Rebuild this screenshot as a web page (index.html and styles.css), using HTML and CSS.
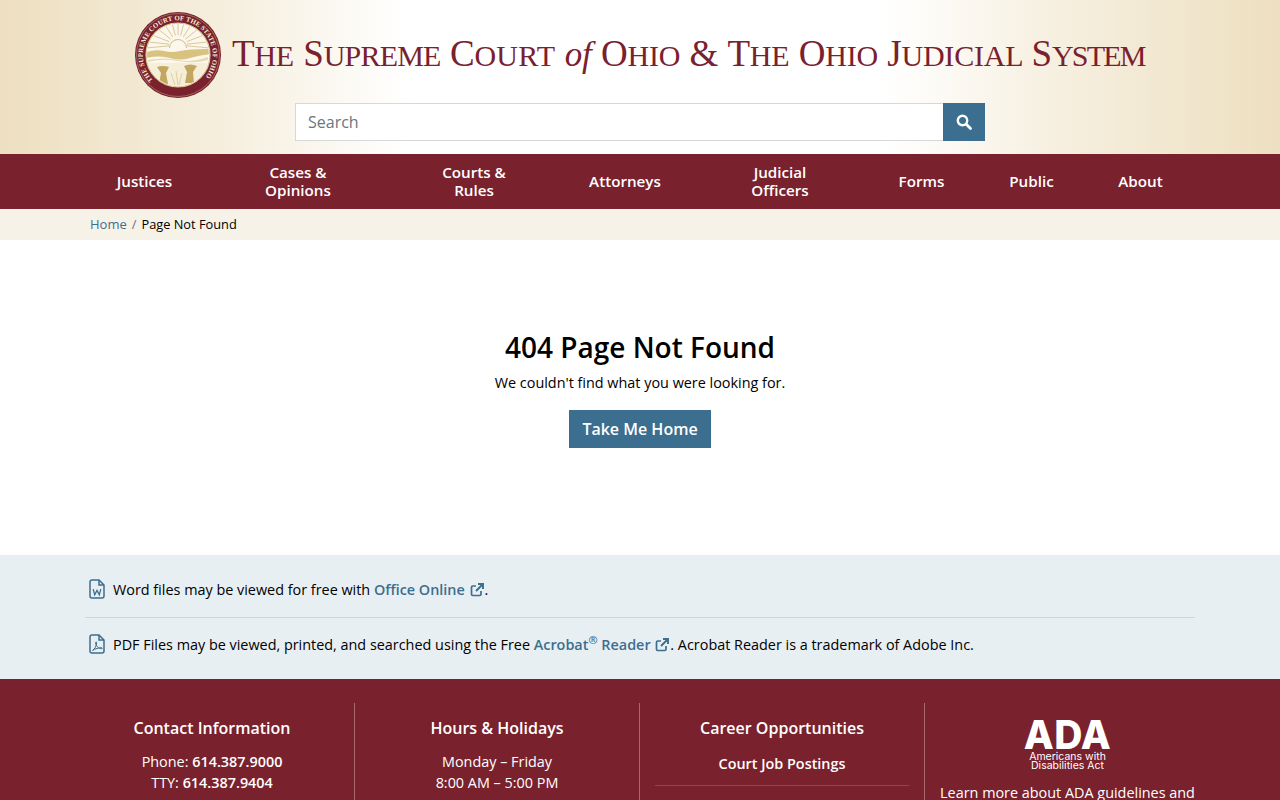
FILE: index.html
```html
<!DOCTYPE html>
<html lang="en">
<head>
<meta charset="utf-8">
<title>404 Page Not Found</title>
<link rel="stylesheet" href="styles.css">
</head>
<body>
<header class="masthead">
  <div class="brand">
    <svg class="seal" viewBox="0 0 88 88" aria-hidden="true">
      <defs>
        <path id="sealArc" d="M19 69 A35 35 0 1 1 70 67.500"/>
        <clipPath id="inner"><circle cx="44" cy="44" r="31"/></clipPath>
      </defs>
      <circle cx="44" cy="44" r="43" fill="#7a212e"/>
      <circle cx="44" cy="44" r="41.500" fill="none" stroke="#c9a98a" stroke-width=".5"/>
      <circle cx="44" cy="44" r="32" fill="#fbf7ec" stroke="#dcc795" stroke-width="1.200"/>
      <text class="seal-text"><textPath href="#sealArc" textLength="160" lengthAdjust="spacing">THE SUPREME COURT OF THE STATE OF OHIO</textPath></text>
      <g clip-path="url(#inner)">
        <g stroke="#d6c38f" stroke-width=".9">
          <path d="M44 34V12M44 34L38 12M44 34L50 12M44 34L31 14M44 34L57 14M44 34L24 18M44 34L64 18M44 34L18 24M44 34L70 24M44 34L14 31M44 34L74 31M44 34L12 37M44 34L76 37"/>
        </g>
        <circle cx="44" cy="33" r="9" fill="#fbf7ec"/>
        <path d="M35.500 37a8.500 8.500 0 0 1 17 0" fill="none" stroke="#cdb67c" stroke-width=".9"/>
        <path d="M10 38h68v2H10z" fill="#fbf7ec"/>
        <path d="M12 41q10-3 18-1t16 0t32-2v5q-12 1-22 4t-20 0t-24 0z" fill="#d9c17f"/>
        <path d="M14 49q18-3 30 0t30-3v3q-14 4-30 1t-30 1z" fill="#e8dab0"/>
        <path d="M13 52h62v26H13z" fill="#f5eed9"/>
        <path d="M23 56q6-2 12 0l-3 6 2 11h-9l2-11z" fill="#c3a662"/>
        <path d="M50 55q6-3 13 0l-4 6 1 11h-9l2-11z" fill="#c3a662"/>
        <path d="M37 62l4 12M42 60l2 14M48 62l-3 12" stroke="#dcc795" stroke-width=".8"/>
      </g>
    </svg>
    <h1 class="site-title"><span class="cap">T</span>he <span class="cap">S</span><span class="tight-a">upreme</span> <span class="cap">C</span><span class="loose">ourt</span> <i class="of">of</i> <span class="cap">O</span>hio <span class="cap">&amp;</span> <span class="cap">T</span>he <span class="cap">O</span>hio <span class="cap">J</span>udicial <span class="cap">S</span><span class="tight-b">ystem</span></h1>
  </div>
  <form class="search">
    <input class="search-input" type="text" placeholder="Search">
    <button class="search-btn" type="button" aria-label="Search">
      <svg viewBox="0 0 16 16" width="16" height="16"><circle cx="6.500" cy="6.500" r="4.700" fill="none" stroke="#fff" stroke-width="2.400"/><path d="M10.500 10.500l4 4" stroke="#fff" stroke-width="2.800" stroke-linecap="round"/></svg>
    </button>
  </form>
</header>

<nav class="mainnav">
  <a class="nav-item n1">Justices</a>
  <a class="nav-item n2">Cases &amp;<br>Opinions</a>
  <a class="nav-item n3">Courts &amp;<br>Rules</a>
  <a class="nav-item n4">Attorneys</a>
  <a class="nav-item n5">Judicial<br>Officers</a>
  <a class="nav-item n6">Forms</a>
  <a class="nav-item n7">Public</a>
  <a class="nav-item n8">About</a>
</nav>

<div class="crumbs">
  <a class="link crumb-link">Home</a><span class="crumb-sep">/</span><span>Page Not Found</span>
</div>

<main class="notfound">
  <h2 class="nf-title">404 Page Not Found</h2>
  <p class="nf-text">We couldn't find what you were looking for.</p>
  <a class="nf-btn">Take Me Home</a>
</main>

<section class="viewers">
  <div class="viewer viewer-word">
    <svg class="file-icon" viewBox="0 0 16 20" aria-hidden="true"><path d="M10 1H3a2 2 0 0 0-2 2v14a2 2 0 0 0 2 2h10a2 2 0 0 0 2-2V6z" fill="none" stroke="#3c6e8f" stroke-width="1.500"/><path d="M10 1v5h5" fill="none" stroke="#3c6e8f" stroke-width="1.500"/><path d="M4.200 10.200l1.500 5.600 2.300-4.400 2.300 4.400 1.500-5.600" fill="none" stroke="#3c6e8f" stroke-width="1.300"/></svg>
    <p>Word files may be viewed for free with <a class="link strong">Office Online <svg class="ext" viewBox="0 0 14 14" aria-hidden="true"><path d="M11 8v3.200a1.300 1.300 0 0 1-1.300 1.300H2.800a1.300 1.300 0 0 1-1.300-1.300V4.300A1.300 1.300 0 0 1 2.800 3H6" fill="none" stroke="#3c6e8f" stroke-width="1.700"/><path d="M8 1h5v5M13 1L6 8" fill="none" stroke="#3c6e8f" stroke-width="1.900"/></svg></a>.</p>
  </div>
  <div class="viewer viewer-pdf">
    <svg class="file-icon" viewBox="0 0 16 20" aria-hidden="true"><path d="M10 1H3a2 2 0 0 0-2 2v14a2 2 0 0 0 2 2h10a2 2 0 0 0 2-2V6z" fill="none" stroke="#3c6e8f" stroke-width="1.500"/><path d="M10 1v5h5" fill="none" stroke="#3c6e8f" stroke-width="1.500"/><path d="M3.600 16.400c2-1 3.800-4.400 4-7.600.1-1.300-1-1.300-1-.1 0 3 3 6 6 6 1 0 1-1-.2-1-2.500 0-6.300 1-8.800 2.700z" fill="none" stroke="#3c6e8f" stroke-width="1"/></svg>
    <p>PDF Files may be viewed, printed, and searched using the Free <a class="link strong">Acrobat<sup class="reg">®</sup> Reader <svg class="ext" viewBox="0 0 14 14" aria-hidden="true"><path d="M11 8v3.200a1.300 1.300 0 0 1-1.300 1.300H2.800a1.300 1.300 0 0 1-1.300-1.300V4.300A1.300 1.300 0 0 1 2.800 3H6" fill="none" stroke="#3c6e8f" stroke-width="1.700"/><path d="M8 1h5v5M13 1L6 8" fill="none" stroke="#3c6e8f" stroke-width="1.900"/></svg></a>. Acrobat Reader is a trademark of Adobe Inc.</p>
  </div>
</section>

<footer class="footer">
  <div class="fcol fcol-first">
    <h3 class="fhead">Contact Information</h3>
    <p class="fline">Phone: <b>614.387.9000</b></p>
    <p class="fline">TTY: <b>614.387.9404</b></p>
  </div>
  <div class="fcol">
    <h3 class="fhead">Hours &amp; Holidays</h3>
    <p class="fline">Monday – Friday</p>
    <p class="fline">8:00 AM – 5:00 PM</p>
  </div>
  <div class="fcol">
    <h3 class="fhead">Career Opportunities</h3>
    <p class="fjob">Court Job Postings</p>
  </div>
  <div class="fcol fcol-ada">
    <div class="ada-logo">
      <span class="ada-big">ADA</span>
      <span class="ada-small">Americans with<br>Disabilities Act</span>
    </div>
    <p class="ada-text">Learn more about ADA guidelines and</p>
  </div>
</footer>
</body>
</html>
```
FILE: styles.css
```css
* { box-sizing: border-box; }
html, body { margin: 0; padding: 0; }
html { height: 800px; overflow: hidden; }
body { font-family: "Open Sans", sans-serif; font-size: 14.4px; color: #000; background: #fff; }
p, h1, h2, h3 { margin: 0; }

.masthead {
  height: 154px;
  background: linear-gradient(90deg, #eddfc0 0%, #f6efdf 18%, #ffffff 32%, #ffffff 69%, #f6efdf 83%, #eddfc0 100%);
  display: flex; flex-direction: column; align-items: center;
}
.brand { display: flex; align-items: center; height: 103px; padding-top: 7px; width: 1010px; transform: translateX(-1px); }
.seal { width: 88px; height: 88px; flex: none; }
.seal-text { font-family: "Liberation Serif", serif; font-size: 6.800px; font-weight: 700; fill: #f6edd8; }
.site-title {
  font-family: "Liberation Serif", serif; font-weight: 400; text-transform: uppercase;
  font-size: 30px; color: #7a212e; margin: 0 0 4px 10px; white-space: nowrap; line-height: 1; letter-spacing: -.2px; word-spacing: 2px;
}
.cap { font-size: 37px; }
.of { font-size: 35px; font-style: italic; text-transform: none; }
.tight-a { letter-spacing: -.8px; }
.tight-b { letter-spacing: -1.800px; }
.loose { letter-spacing: .3px; }
.search { display: flex; width: 690px; height: 38px; }
.search-input {
  flex: 1; height: 38px; border: 1px solid #d8d8d8; border-right: 0; background: #fff; padding: 0 12px;
  font-family: "Open Sans", sans-serif; font-size: 16px; color: #333;
}
.search-input::placeholder { color: #6c757d; opacity: 1; }
.search-btn { width: 42px; height: 38px; border: 0; padding: 0; background: #3c6e8f; display: flex; align-items: center; justify-content: center; }

.mainnav {
  height: 55px; background: #7a212e; display: flex; align-items: center; padding: 0 85px 2px;
}
.nav-item { color: #fff; font-weight: 600; font-size: 15.200px; line-height: 18px; text-align: center; display: block; flex: none; }
.n1 { width: 119px; }
.n2 { width: 188px; }
.n3 { width: 164px; }
.n4 { width: 138px; }
.n5 { width: 172px; }
.n6 { width: 111px; }
.n7 { width: 109px; }
.n8 { width: 109px; }

.crumbs { height: 31px; background: #f7f2e7; padding: 0 90px 2px; display: flex; align-items: center; font-size: 12.800px; }
.link { color: #3c6e8f; }
.crumb-link { font-weight: 500; font-size: 13px; }
.strong { font-weight: 600; }
.crumb-sep { color: #6c757d; margin: 0 5px; }

.notfound { height: 315px; display: flex; flex-direction: column; align-items: center; padding-top: 89px; }
.nf-title { font-size: 28px; font-weight: 600; line-height: 36px; }
.nf-text { font-size: 14.400px; line-height: 20px; margin-top: 8px; }
.nf-btn { margin-top: 17px; height: 38px; width: 142px; background: #3c6e8f; color: #fff; font-weight: 600; font-size: 16px; display: flex; align-items: center; justify-content: center; }

.viewers { height: 124px; background: #e8eff3; padding: 0 85px; }
.viewer { display: flex; align-items: center; padding-left: 4px; }
.viewer-word { height: 63px; border-bottom: 1px solid #cfd6da; padding-top: 8px; }
.viewer-pdf { height: 53px; }
.viewer p { margin-left: 8px; font-size: 14.400px; line-height: 20px; white-space: nowrap; }
.file-icon { width: 16px; height: 20px; flex: none; margin-top: -2px; }
.ext { width: 14px; height: 14px; vertical-align: -2px; margin: 0 1px; }
.reg { font-size: 11px; line-height: 0; }

.footer { background: #7a212e; color: #fff; height: 121px; padding: 24px 85px 0; display: flex; align-items: flex-start; }
.fcol { width: 285px; height: 97px; padding: 14px 15px 0; text-align: center; border-left: 1px solid #a8686f; flex: none; }
.fcol-first { border-left: 0; width: 269px; padding-left: 0; }
.fcol-ada { width: 286px; padding: 16px 0 0; }
.fhead { font-size: 16px; font-weight: 600; line-height: 22px; margin-bottom: 12px; }
.fline { font-size: 14.400px; line-height: 21px; }
.fline b { font-weight: 600; }
.fjob { font-size: 14.400px; font-weight: 600; line-height: 20px; padding: 3px 0 11px; border-bottom: 1px solid #8f4651; }
.ada-logo { display: flex; flex-direction: column; align-items: center; }
.ada-big { font-family: "Inter", sans-serif; font-weight: 800; font-size: 39px; line-height: 32px; letter-spacing: .3px; }
.ada-small { font-family: "Inter", sans-serif; font-size: 10.500px; line-height: 9px; margin-top: 1px; text-align: center; }
.ada-text { font-size: 14.400px; line-height: 20px; margin-top: 13px; white-space: nowrap; }
```
